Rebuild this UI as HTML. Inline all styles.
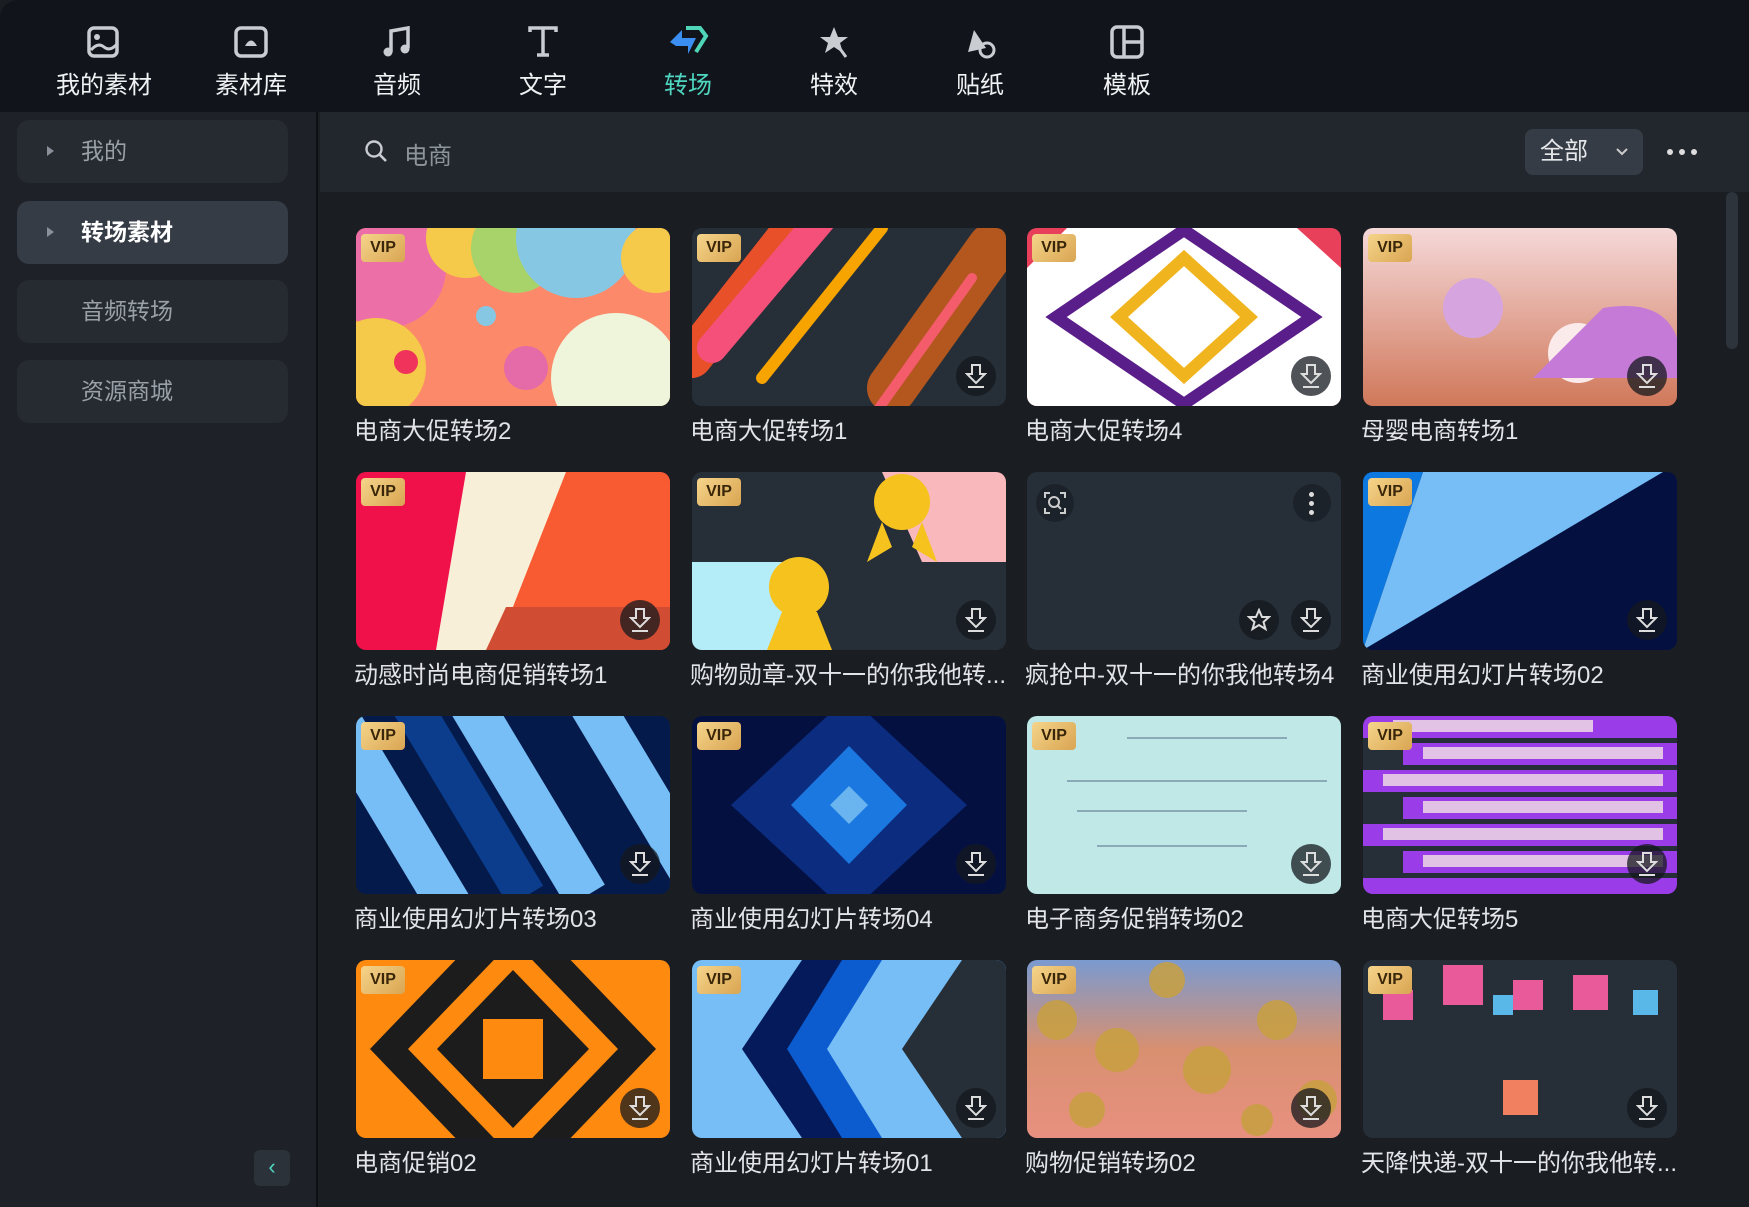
<!DOCTYPE html>
<html><head><meta charset="utf-8"><style>
*{margin:0;padding:0;box-sizing:border-box}
body{width:1749px;height:1207px;background:#1a1d21;font-family:"Liberation Sans","Noto Sans CJK SC",sans-serif;color:#e6e8eb;overflow:hidden;position:relative}
.top{position:absolute;left:0;top:0;width:1749px;height:112px;background:#11151b;border-top-left-radius:18px}
.tab{position:absolute;top:0;width:140px;text-align:center}
.tab svg{position:absolute;left:50%;top:22px;transform:translateX(-50%)}
.tab span{position:absolute;left:0;right:0;top:65px;font-size:24px;color:#f1f2f4}
.side{position:absolute;left:0;top:112px;width:318px;height:1095px;background:#1e2228;border-right:2px solid #0e1013}
.item{position:absolute;left:17px;width:271px;height:63px;border-radius:12px;background:#262b32;font-size:23px;color:#9aa0a8;line-height:63px;padding-left:64px}
.item.act{background:#363c45;color:#fff;font-weight:bold}
.item .tri{position:absolute;left:30px;top:26px;width:0;height:0;border-left:7px solid #8a9099;border-top:5px solid transparent;border-bottom:5px solid transparent}
.search{position:absolute;left:320px;top:112px;width:1429px;height:80px;background:#22272e}
.card{position:absolute;width:314px;height:178px;border-radius:10px;overflow:hidden;background:#262e38}
.card svg.bg{position:absolute;left:0;top:0}
.vip{position:absolute;left:5px;top:6px;width:44px;height:28px;border-radius:4px;background:linear-gradient(135deg,#f5d48a,#d9a552);color:#3a2608;font-size:16px;font-weight:bold;text-align:center;line-height:28px}
.dl{position:absolute;right:10px;bottom:10px;width:40px;height:40px;border-radius:50%;background:rgba(20,24,30,.75)}
.dl svg{position:absolute;left:9px;top:7px}
.lbl{position:absolute;font-size:24px;color:#e2e4e7;white-space:nowrap;width:320px;overflow:hidden}
</style></head><body>
<div class="top">
 <div class="tab" style="left:34px"><svg width="40" height="40" viewBox="0 0 40 40"><rect x="5" y="6" width="28" height="28" rx="5" fill="none" stroke="#c9ccd1" stroke-width="3.5"/><circle cx="13" cy="15" r="3" fill="#c9ccd1"/><path d="M7 28 Q14 20 20 25 T33 22" fill="none" stroke="#c9ccd1" stroke-width="3"/></svg><span>我的素材</span></div>
 <div class="tab" style="left:181px"><svg width="40" height="40" viewBox="0 0 40 40"><rect x="5" y="6" width="30" height="28" rx="5" fill="none" stroke="#c9ccd1" stroke-width="3.5"/><path d="M14 24 Q20 13 26 24 Z" fill="#c9ccd1"/></svg><span>素材库</span></div>
 <div class="tab" style="left:327px"><svg width="40" height="40" viewBox="0 0 40 40"><path d="M14 30 V9 L31 6 V26" fill="none" stroke="#c9ccd1" stroke-width="3.5"/><circle cx="11" cy="30" r="4.5" fill="#c9ccd1"/><circle cx="28" cy="27" r="4.5" fill="#c9ccd1"/></svg><span>音频</span></div>
 <div class="tab" style="left:473px"><svg width="40" height="40" viewBox="0 0 40 40"><path d="M7 10 V6 H33 V10 M20 6 V33 M14 33 H26" fill="none" stroke="#c9ccd1" stroke-width="3.5"/></svg><span>文字</span></div>
 <div class="tab" style="left:618px"><svg width="44" height="40" viewBox="0 0 44 40"><path d="M4 20 L16 8 V16 H30 L22 32 V24 H10 Z" fill="#3b8ff2"/><path d="M20 6 L34 6 L40 14 L30 30" fill="none" stroke="#4fd6b9" stroke-width="4"/></svg><span style="color:#4fd6c0">转场</span></div>
 <div class="tab" style="left:764px"><svg width="40" height="40" viewBox="0 0 40 40"><path d="M20 5 L24 15 L34 15 L26 21 L29 31 L20 25 L11 31 L14 21 L6 15 L16 15 Z" fill="#c9ccd1"/><path d="M24 24 L32 35" stroke="#c9ccd1" stroke-width="3"/></svg><span>特效</span></div>
 <div class="tab" style="left:910px"><svg width="40" height="40" viewBox="0 0 40 40"><path d="M8 30 L14 8 L26 26 Z" fill="#c9ccd1"/><circle cx="27" cy="28" r="7" fill="none" stroke="#c9ccd1" stroke-width="3"/></svg><span>贴纸</span></div>
 <div class="tab" style="left:1057px"><svg width="40" height="40" viewBox="0 0 40 40"><rect x="5" y="5" width="30" height="30" rx="5" fill="none" stroke="#c9ccd1" stroke-width="3.5"/><path d="M17 5 V35 M17 20 H35" stroke="#c9ccd1" stroke-width="3.5"/></svg><span>模板</span></div>
</div>
<div class="side">
 <div class="item" style="top:8px"><i class="tri"></i>我的</div>
 <div class="item act" style="top:89px"><i class="tri"></i>转场素材</div>
 <div class="item" style="top:168px">音频转场</div>
 <div class="item" style="top:248px">资源商城</div>
 <div style="position:absolute;left:254px;top:1038px;width:36px;height:36px;border-radius:6px;background:#2c323a;color:#4fd6c0;font-size:22px;text-align:center;line-height:34px">‹</div>
</div>
<div class="search">
 <svg style="position:absolute;left:44px;top:27px" width="26" height="26" viewBox="0 0 26 26"><circle cx="10" cy="10" r="7.5" fill="none" stroke="#c8ccd1" stroke-width="2.4"/><path d="M15.5 15.5 L22 22" stroke="#c8ccd1" stroke-width="2.6"/></svg>
 <span style="position:absolute;left:84px;top:24px;font-size:24px;color:#8e949c">电商</span>
 <div style="position:absolute;left:1205px;top:17px;width:118px;height:46px;border-radius:8px;background:#363c45;font-size:24px;line-height:46px;padding-left:15px;color:#e6e8eb">全部<svg style="position:absolute;right:14px;top:18px" width="14" height="10" viewBox="0 0 14 10"><path d="M2 2 L7 7 L12 2" fill="none" stroke="#ccc" stroke-width="2"/></svg></div>
 <div style="position:absolute;left:1347px;top:37px"><i style="position:absolute;left:0;width:6px;height:6px;border-radius:3px;background:#ddd"></i><i style="position:absolute;left:12px;width:6px;height:6px;border-radius:3px;background:#ddd"></i><i style="position:absolute;left:24px;width:6px;height:6px;border-radius:3px;background:#ddd"></i></div>
</div>
<div style="position:absolute;left:1726px;top:192px;width:12px;height:157px;border-radius:6px;background:#2e343c"></div>

<!-- Row 1 -->
<div class="card" style="left:356px;top:228px"><svg class="bg" width="314" height="178"><rect width="314" height="178" fill="#fc8a6a"/><circle cx="30" cy="40" r="60" fill="#ec6fa8"/><circle cx="110" cy="10" r="40" fill="#f5c94a"/><circle cx="160" cy="20" r="45" fill="#a7d36a"/><circle cx="220" cy="10" r="60" fill="#86c8e4"/><circle cx="300" cy="30" r="35" fill="#f5c94a"/><circle cx="20" cy="140" r="50" fill="#f5c94a"/><circle cx="260" cy="150" r="65" fill="#eef5da"/><circle cx="170" cy="140" r="22" fill="#e46aa8"/><circle cx="50" cy="134" r="12" fill="#f0335a"/><circle cx="130" cy="88" r="10" fill="#86c8e4"/></svg><div class="vip">VIP</div></div>
<div class="card" style="left:692px;top:228px"><svg class="bg" width="314" height="178"><rect width="314" height="178" fill="#262e38"/><g stroke-linecap="round"><path d="M0 130 L110 -10" stroke="#e8502a" stroke-width="40"/><path d="M20 120 L130 -10" stroke="#f5507a" stroke-width="30"/><path d="M70 150 L190 0" stroke="#f7a300" stroke-width="12"/><path d="M200 160 L300 20" stroke="#b4571e" stroke-width="50"/><path d="M180 190 L280 50" stroke="#f45c6c" stroke-width="10"/></g></svg><div class="vip">VIP</div><div class="dl"><svg width="22" height="26" viewBox="0 0 22 26"><path d="M7 2 H15 V11 H20 L11 20 L2 11 H7 Z M3 24 H19" fill="none" stroke="#ddd" stroke-width="2"/></svg></div></div>
<div class="card" style="left:1027px;top:228px"><svg class="bg" width="314" height="178"><rect width="314" height="178" fill="#e8405a"/><path d="M40 0 H270 L314 40 V178 H0 V40 Z" fill="#fff"/><path d="M157 2 L285 89 L157 176 L29 89 Z" fill="none" stroke="#5a1e8a" stroke-width="12"/><path d="M157 30 L222 89 L157 148 L92 89 Z" fill="none" stroke="#f0b41e" stroke-width="12"/></svg><div class="vip">VIP</div><div class="dl"><svg width="22" height="26" viewBox="0 0 22 26"><path d="M7 2 H15 V11 H20 L11 20 L2 11 H7 Z M3 24 H19" fill="none" stroke="#ddd" stroke-width="2"/></svg></div></div>
<div class="card" style="left:1363px;top:228px"><svg class="bg" width="314" height="178"><defs><linearGradient id="g4" x1="0" y1="0" x2="0" y2="1"><stop offset="0" stop-color="#f5d8d8"/><stop offset="1" stop-color="#d0785a"/></linearGradient></defs><rect width="314" height="178" fill="url(#g4)"/><circle cx="110" cy="80" r="30" fill="#d6a5e0"/><circle cx="215" cy="125" r="30" fill="#fbeaea"/><path d="M240 80 Q300 70 314 110 V150 H170 Z" fill="#c47ad6"/></svg><div class="vip">VIP</div><div class="dl"><svg width="22" height="26" viewBox="0 0 22 26"><path d="M7 2 H15 V11 H20 L11 20 L2 11 H7 Z M3 24 H19" fill="none" stroke="#ddd" stroke-width="2"/></svg></div></div>
<div class="lbl" style="left:354px;top:411px">电商大促转场2</div>
<div class="lbl" style="left:690px;top:411px">电商大促转场1</div>
<div class="lbl" style="left:1025px;top:411px">电商大促转场4</div>
<div class="lbl" style="left:1361px;top:411px">母婴电商转场1</div>

<!-- Row 2 -->
<div class="card" style="left:356px;top:472px"><svg class="bg" width="314" height="178"><rect width="314" height="178" fill="#f0104a"/><path d="M150 0 H314 V178 H130 Z" fill="#f85a32"/><path d="M110 0 H210 L140 178 H80 Z" fill="#f8efd8"/><path d="M150 135 H314 V178 H130 Z" fill="#d04c32"/></svg><div class="vip">VIP</div><div class="dl"><svg width="22" height="26" viewBox="0 0 22 26"><path d="M7 2 H15 V11 H20 L11 20 L2 11 H7 Z M3 24 H19" fill="none" stroke="#ddd" stroke-width="2"/></svg></div></div>
<div class="card" style="left:692px;top:472px"><svg class="bg" width="314" height="178"><rect width="314" height="178" fill="#262e38"/><path d="M190 0 H314 V90 H230 Z" fill="#f9b8bc"/><path d="M0 90 H110 L130 178 H0 Z" fill="#b4ecf8"/><circle cx="210" cy="30" r="28" fill="#f5c21e"/><path d="M190 50 L175 90 L200 75 Z M230 50 L245 90 L220 75 Z" fill="#f5c21e"/><circle cx="107" cy="115" r="30" fill="#f5c21e"/><path d="M90 140 L75 178 H140 L125 140 Z" fill="#f5c21e"/></svg><div class="vip">VIP</div><div class="dl"><svg width="22" height="26" viewBox="0 0 22 26"><path d="M7 2 H15 V11 H20 L11 20 L2 11 H7 Z M3 24 H19" fill="none" stroke="#ddd" stroke-width="2"/></svg></div></div>
<div class="card" style="left:1027px;top:472px"><div style="position:absolute;left:9px;top:12px;width:38px;height:38px;border-radius:50%;background:#1c2229"><svg style="position:absolute;left:8px;top:8px" width="22" height="22" viewBox="0 0 22 22"><circle cx="10" cy="10" r="5" fill="none" stroke="#ccc" stroke-width="2"/><path d="M14 14 L17 17 M1 6 V1 H6 M16 1 H21 V6 M21 16 V21 H16 M6 21 H1 V16" fill="none" stroke="#ccc" stroke-width="2"/></svg></div><div style="position:absolute;right:10px;top:12px;width:38px;height:38px;border-radius:50%;background:#1c2229"><i style="position:absolute;left:16px;top:8px;width:5px;height:5px;border-radius:3px;background:#ddd"></i><i style="position:absolute;left:16px;top:17px;width:5px;height:5px;border-radius:3px;background:#ddd"></i><i style="position:absolute;left:16px;top:26px;width:5px;height:5px;border-radius:3px;background:#ddd"></i></div><div class="dl" style="right:62px"><svg width="24" height="24" viewBox="0 0 24 24" style="left:8px;top:8px"><path d="M12 2 L15 9 L22 9 L16.5 14 L18.5 21 L12 17 L5.5 21 L7.5 14 L2 9 L9 9 Z" fill="none" stroke="#ddd" stroke-width="2"/></svg></div><div class="dl"><svg width="22" height="26" viewBox="0 0 22 26"><path d="M7 2 H15 V11 H20 L11 20 L2 11 H7 Z M3 24 H19" fill="none" stroke="#ddd" stroke-width="2"/></svg></div></div>
<div class="card" style="left:1363px;top:472px"><svg class="bg" width="314" height="178"><rect width="314" height="178" fill="#041040"/><path d="M0 0 H60 L0 178 Z" fill="#0c78e0"/><path d="M60 0 H300 L0 178 Z" fill="#76bef5"/></svg><div class="vip">VIP</div><div class="dl"><svg width="22" height="26" viewBox="0 0 22 26"><path d="M7 2 H15 V11 H20 L11 20 L2 11 H7 Z M3 24 H19" fill="none" stroke="#ddd" stroke-width="2"/></svg></div></div>
<div class="lbl" style="left:354px;top:655px">动感时尚电商促销转场1</div>
<div class="lbl" style="left:690px;top:655px;width:322px">购物勋章-双十一的你我他转...</div>
<div class="lbl" style="left:1025px;top:655px">疯抢中-双十一的你我他转场4</div>
<div class="lbl" style="left:1361px;top:655px">商业使用幻灯片转场02</div>

<!-- Row 3 -->
<div class="card" style="left:356px;top:716px"><svg class="bg" width="314" height="178"><rect width="314" height="178" fill="#041a4a"/><g stroke="#76bef5" stroke-width="44"><path d="M-20 0 L100 200"/><path d="M110 -20 L230 180"/><path d="M230 -20 L350 180"/></g><g stroke="#0c3c8c" stroke-width="40"><path d="M50 -20 L170 180"/></g></svg><div class="vip">VIP</div><div class="dl"><svg width="22" height="26" viewBox="0 0 22 26"><path d="M7 2 H15 V11 H20 L11 20 L2 11 H7 Z M3 24 H19" fill="none" stroke="#ddd" stroke-width="2"/></svg></div></div>
<div class="card" style="left:692px;top:716px"><svg class="bg" width="314" height="178"><rect width="314" height="178" fill="#041040"/><path d="M157 -20 L275 89 L157 198 L39 89 Z" fill="#0c2c80"/><path d="M157 30 L215 89 L157 148 L99 89 Z" fill="#1a78e0"/><path d="M157 70 L176 89 L157 108 L138 89 Z" fill="#6ab4f0"/></svg><div class="vip">VIP</div><div class="dl"><svg width="22" height="26" viewBox="0 0 22 26"><path d="M7 2 H15 V11 H20 L11 20 L2 11 H7 Z M3 24 H19" fill="none" stroke="#ddd" stroke-width="2"/></svg></div></div>
<div class="card" style="left:1027px;top:716px"><svg class="bg" width="314" height="178"><rect width="314" height="178" fill="#bfe8e6"/><g stroke="#8aaab8" stroke-width="2"><path d="M100 22 H260"/><path d="M40 65 H300"/><path d="M50 95 H220"/><path d="M70 130 H220"/></g></svg><div class="vip">VIP</div><div class="dl"><svg width="22" height="26" viewBox="0 0 22 26"><path d="M7 2 H15 V11 H20 L11 20 L2 11 H7 Z M3 24 H19" fill="none" stroke="#ddd" stroke-width="2"/></svg></div></div>
<div class="card" style="left:1363px;top:716px"><svg class="bg" width="314" height="178"><rect width="314" height="178" fill="#262e38"/><g fill="#9a3ce8"><rect x="0" y="0" width="314" height="22"/><rect x="40" y="27" width="274" height="22"/><rect x="0" y="54" width="314" height="22"/><rect x="40" y="81" width="274" height="22"/><rect x="0" y="108" width="314" height="22"/><rect x="40" y="135" width="274" height="22"/><rect x="0" y="162" width="314" height="16"/></g><g fill="#f4e4e4" opacity=".8"><rect x="30" y="4" width="200" height="12"/><rect x="60" y="31" width="240" height="12"/><rect x="20" y="58" width="280" height="12"/><rect x="60" y="85" width="240" height="12"/><rect x="20" y="112" width="280" height="12"/><rect x="60" y="139" width="240" height="12"/></g></svg><div class="vip">VIP</div><div class="dl"><svg width="22" height="26" viewBox="0 0 22 26"><path d="M7 2 H15 V11 H20 L11 20 L2 11 H7 Z M3 24 H19" fill="none" stroke="#ddd" stroke-width="2"/></svg></div></div>
<div class="lbl" style="left:354px;top:899px">商业使用幻灯片转场03</div>
<div class="lbl" style="left:690px;top:899px">商业使用幻灯片转场04</div>
<div class="lbl" style="left:1025px;top:899px">电子商务促销转场02</div>
<div class="lbl" style="left:1361px;top:899px">电商大促转场5</div>

<!-- Row 4 -->
<div class="card" style="left:356px;top:960px"><svg class="bg" width="314" height="178"><rect width="314" height="178" fill="#ff8a10"/><path d="M157 -60 L300 89 L157 238 L14 89 Z" fill="#1c1c1c"/><path d="M157 -20 L262 89 L157 198 L52 89 Z" fill="#ff8a10"/><path d="M157 10 L233 89 L157 168 L81 89 Z" fill="#1c1c1c"/><rect x="127" y="59" width="60" height="60" fill="#ff8a10"/></svg><div class="vip">VIP</div><div class="dl"><svg width="22" height="26" viewBox="0 0 22 26"><path d="M7 2 H15 V11 H20 L11 20 L2 11 H7 Z M3 24 H19" fill="none" stroke="#ddd" stroke-width="2"/></svg></div></div>
<div class="card" style="left:692px;top:960px"><svg class="bg" width="314" height="178"><rect width="314" height="178" fill="#76bef5"/><path d="M110 0 H314 V178 H110 L50 89 Z" fill="#041a5a"/><path d="M150 0 H314 V178 H150 L95 89 Z" fill="#0c5cd0"/><path d="M190 0 H314 V178 H190 L135 89 Z" fill="#76bef5"/><path d="M270 0 H314 V178 H270 L210 89 Z" fill="#262e38"/></svg><div class="vip">VIP</div><div class="dl"><svg width="22" height="26" viewBox="0 0 22 26"><path d="M7 2 H15 V11 H20 L11 20 L2 11 H7 Z M3 24 H19" fill="none" stroke="#ddd" stroke-width="2"/></svg></div></div>
<div class="card" style="left:1027px;top:960px"><svg class="bg" width="314" height="178"><defs><linearGradient id="g15" x1="0" y1="0" x2="0" y2="1"><stop offset="0" stop-color="#7a9ad0"/><stop offset=".5" stop-color="#d89070"/><stop offset="1" stop-color="#e89080"/></linearGradient></defs><rect width="314" height="178" fill="url(#g15)"/><g fill="#c8a040" opacity=".85"><circle cx="30" cy="60" r="20"/><circle cx="90" cy="90" r="22"/><circle cx="140" cy="20" r="18"/><circle cx="180" cy="110" r="24"/><circle cx="250" cy="60" r="20"/><circle cx="290" cy="140" r="20"/><circle cx="60" cy="150" r="18"/><circle cx="230" cy="160" r="16"/></g></svg><div class="vip">VIP</div><div class="dl"><svg width="22" height="26" viewBox="0 0 22 26"><path d="M7 2 H15 V11 H20 L11 20 L2 11 H7 Z M3 24 H19" fill="none" stroke="#ddd" stroke-width="2"/></svg></div></div>
<div class="card" style="left:1363px;top:960px"><svg class="bg" width="314" height="178"><rect width="314" height="178" fill="#262e38"/><g fill="#e85a9a"><rect x="80" y="5" width="40" height="40"/><rect x="150" y="20" width="30" height="30"/><rect x="210" y="15" width="35" height="35"/><rect x="20" y="30" width="30" height="30"/></g><g fill="#5ab8e8"><rect x="130" y="35" width="20" height="20"/><rect x="270" y="30" width="25" height="25"/></g><rect x="140" y="120" width="35" height="35" fill="#f08060"/></svg><div class="vip">VIP</div><div class="dl"><svg width="22" height="26" viewBox="0 0 22 26"><path d="M7 2 H15 V11 H20 L11 20 L2 11 H7 Z M3 24 H19" fill="none" stroke="#ddd" stroke-width="2"/></svg></div></div>
<div class="lbl" style="left:354px;top:1143px">电商促销02</div>
<div class="lbl" style="left:690px;top:1143px">商业使用幻灯片转场01</div>
<div class="lbl" style="left:1025px;top:1143px">购物促销转场02</div>
<div class="lbl" style="left:1361px;top:1143px;width:322px">天降快递-双十一的你我他转...</div>
</body></html>
